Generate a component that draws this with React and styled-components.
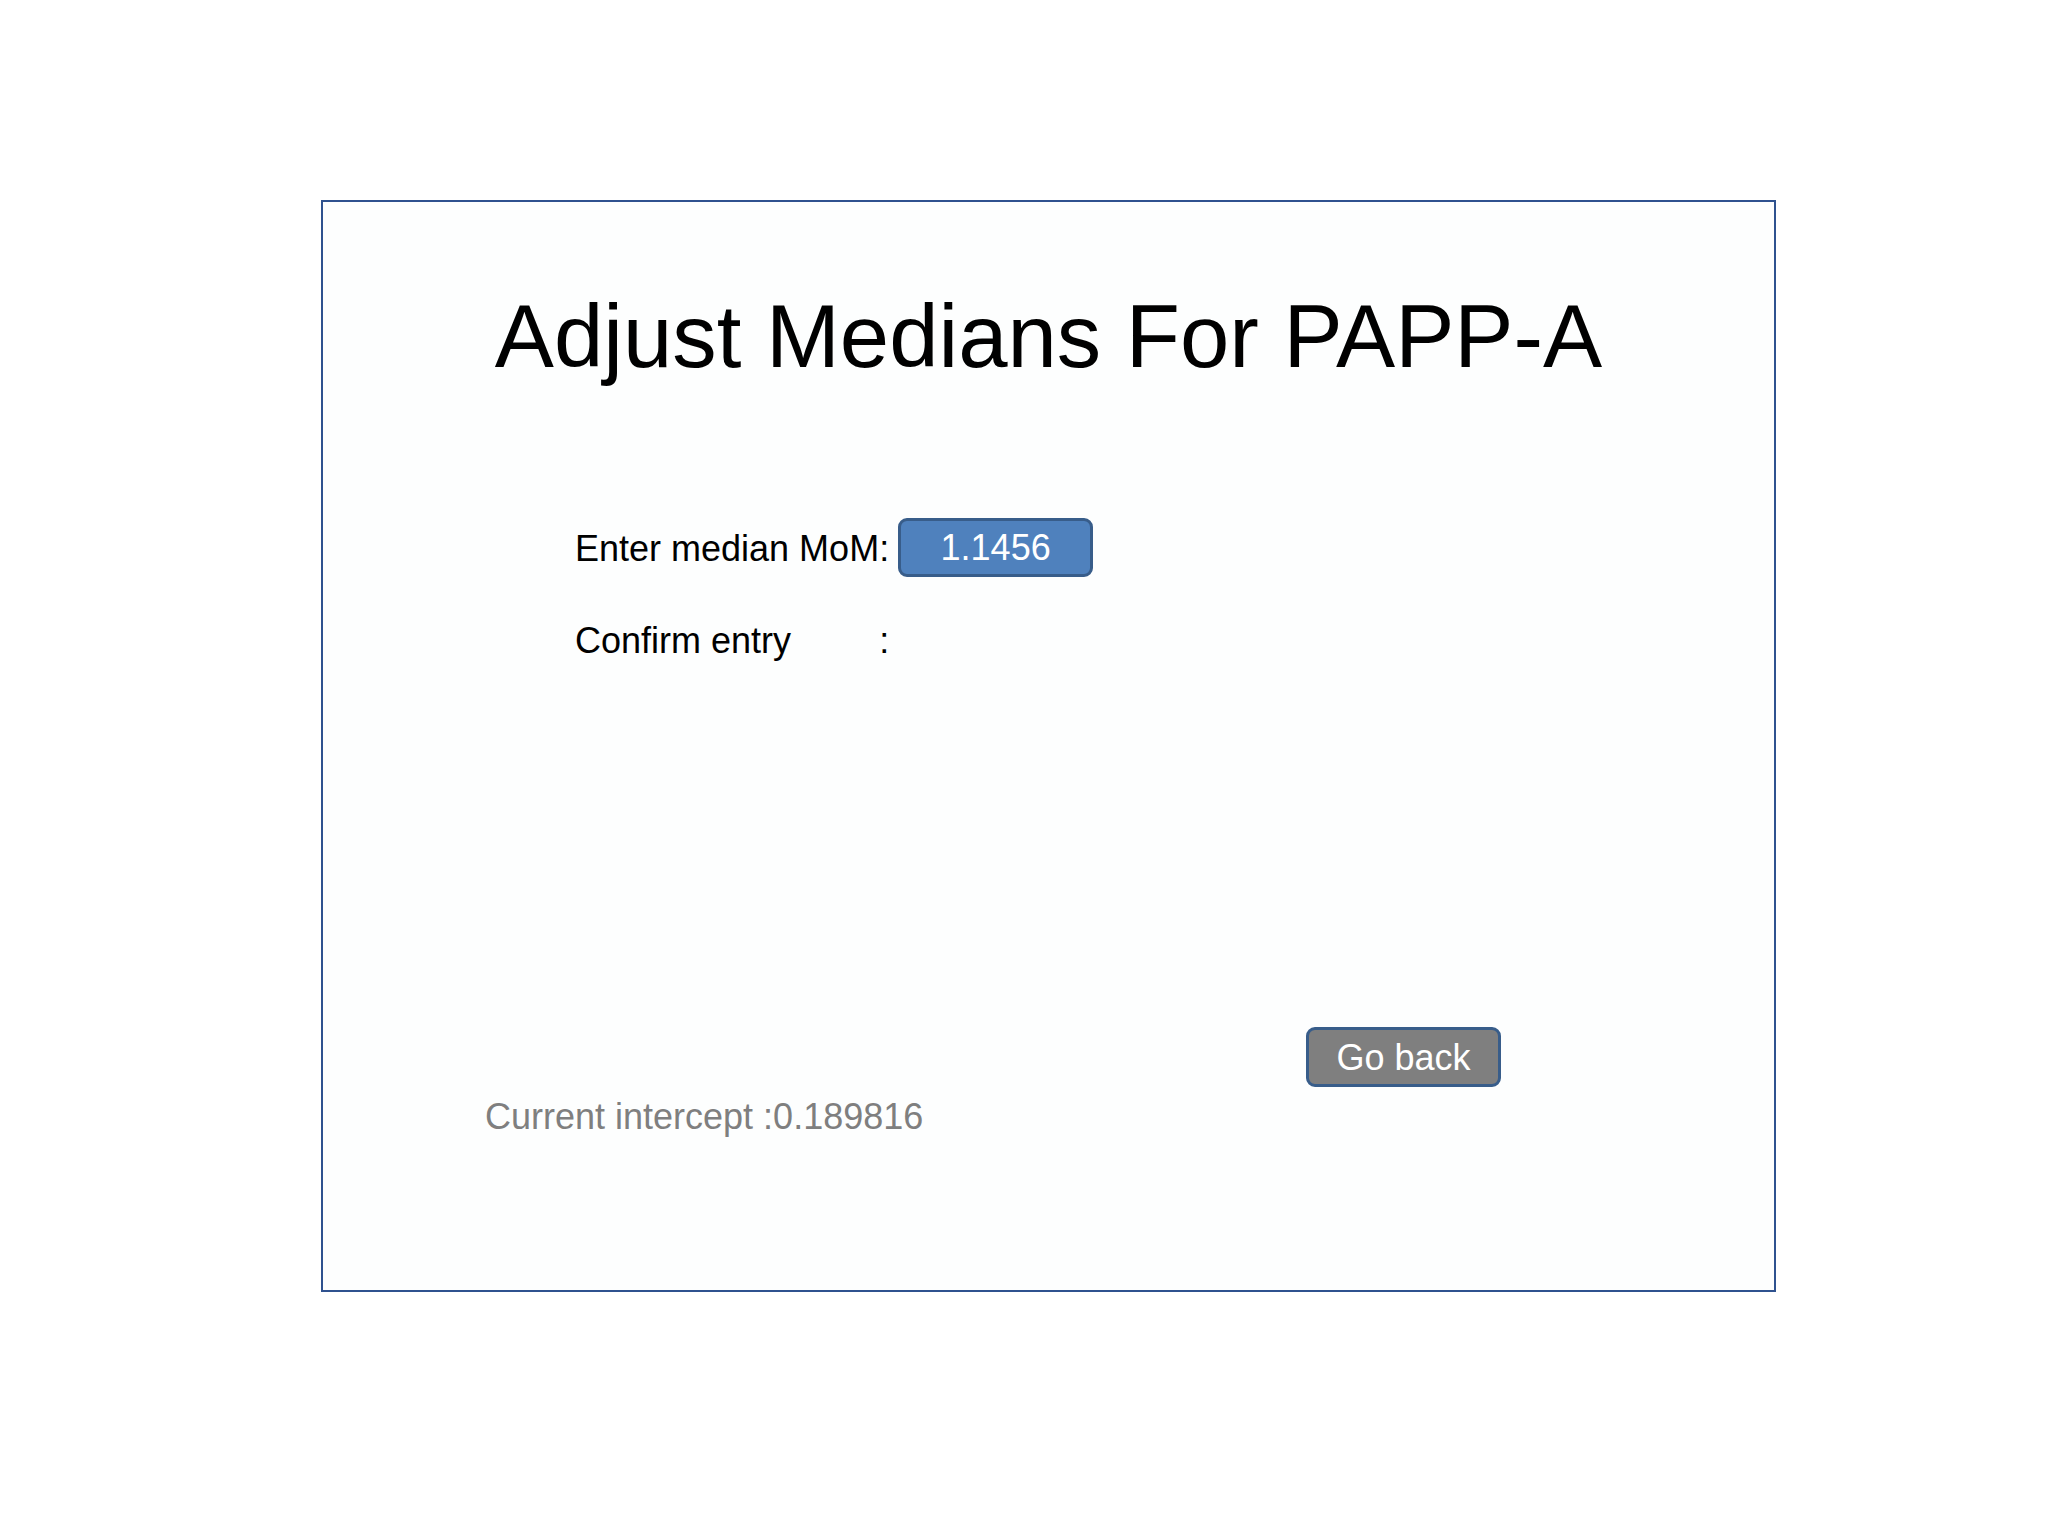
import React from 'react';
import styled, { createGlobalStyle } from 'styled-components';

const GlobalStyle = createGlobalStyle`
  html, body {
    margin: 0;
    padding: 0;
    background: #ffffff;
  }
  body {
    font-family: "Liberation Sans", Arial, sans-serif;
  }
`;

const App = () => {
  return (
    <>
      <GlobalStyle />
      <Page>
        <Panel>
          <Title>Adjust Medians For PAPP-A</Title>

          <Form>
            <Label>Enter median MoM</Label>
            <Colon>:</Colon>
            <ValueInput type="text" defaultValue="1.1456" />

            <Label>Confirm entry</Label>
            <Colon>:</Colon>
            <span />
          </Form>

          <ButtonRow>
            <BackButton>Go back</BackButton>
          </ButtonRow>

          <Intercept>Current intercept :0.189816</Intercept>
        </Panel>
      </Page>
    </>
  );
};

const Page = styled.div`
  width: 2048px;
  height: 1536px;
  box-sizing: border-box;
  padding: 200px 0 0 321px;
  background: #ffffff;
`;

const Panel = styled.div`
  width: 1455px;
  height: 1092px;
  box-sizing: border-box;
  border: 2px solid #2f528f;
  background: #fdfefe;
  padding-top: 90px;
  display: flex;
  flex-direction: column;
`;

const Title = styled.h1`
  margin: 0;
  font-size: 88.7px;
  line-height: 89px;
  font-weight: normal;
  text-align: center;
  color: #000000;
`;

const Form = styled.div`
  display: grid;
  grid-template-columns: max-content max-content 195px;
  grid-auto-rows: 58px;
  row-gap: 34px;
  align-items: center;
  margin: 137px 0 0 252px;
`;

const Label = styled.span`
  font-size: 36px;
  line-height: 36px;
  padding-top: 3px;
  color: #000000;
  white-space: pre;
`;

const Colon = styled(Label)`
  margin-right: 9px;
`;

const ValueInput = styled.input`
  width: 195px;
  height: 59px;
  box-sizing: border-box;
  border: 3px solid #385d8a;
  border-radius: 9px;
  background: #4f81bd;
  color: #ffffff;
  font-family: "Liberation Sans", Arial, sans-serif;
  font-size: 36px;
  text-align: center;
  padding: 2px 0 0;
  outline: none;
`;

const ButtonRow = styled.div`
  display: flex;
  justify-content: flex-end;
  padding-right: 273px;
  margin-top: 359px;
`;

const BackButton = styled.button`
  width: 195px;
  height: 60px;
  box-sizing: border-box;
  border: 3px solid #385d8a;
  border-radius: 9px;
  background: #7f7f7f;
  color: #ffffff;
  font-family: "Liberation Sans", Arial, sans-serif;
  font-size: 36px;
  padding: 2px 0 0;
  cursor: pointer;

  &:hover {
    background: #6f6f6f;
  }
`;

const Intercept = styled.div`
  margin-top: 12px;
  padding-left: 162px;
  font-size: 36px;
  line-height: 36px;
  color: #7f7f7f;
`;

export default App;
